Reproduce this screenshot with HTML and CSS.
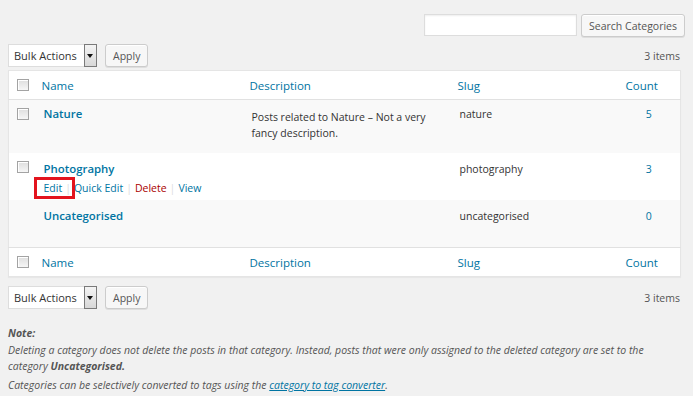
FILE: index.html
```html
<!DOCTYPE html>
<html lang="en">
<head>
  <meta charset="UTF-8">
  <meta name="viewport" content="width=device-width, initial-scale=1.0">
  <title>Categories</title>
  <link rel="stylesheet" href="styles.css">
</head>
<body>
  <div class="wrap">
    <form class="search-box">
      <input type="search" class="search-input">
      <button type="button" class="button">Search Categories</button>
    </form>

    <div class="tablenav">
      <div class="select-wrap">
        <select class="bulk-select">
          <option>Bulk Actions</option>
          <option>Delete</option>
        </select>
        <span class="select-arrow"></span>
      </div>
      <button type="button" class="button">Apply</button>
      <span class="num-items">3 items</span>
    </div>

    <table class="list-table">
      <colgroup>
        <col class="w-cb">
        <col class="w-name">
        <col class="w-desc">
        <col class="w-slug">
        <col class="w-count">
      </colgroup>
      <thead>
        <tr>
          <th class="col-cb"><input type="checkbox" class="cb"></th>
          <th><a href="#">Name</a></th>
          <th><a href="#">Description</a></th>
          <th><a href="#">Slug</a></th>
          <th><a href="#">Count</a></th>
        </tr>
      </thead>
      <tbody>
        <tr class="alt first">
          <td class="col-cb"><input type="checkbox" class="cb"></td>
          <td class="col-name">
            <a href="#" class="row-title">Nature</a>
          </td>
          <td class="desc-text">Posts related to Nature – Not a very fancy description.</td>
          <td>nature</td>
          <td class="col-count"><a href="#">5</a></td>
        </tr>
        <tr>
          <td class="col-cb"><input type="checkbox" class="cb"></td>
          <td class="col-name">
            <a href="#" class="row-title">Photography</a>
            <div class="row-actions">
              <span class="edit-mark"><a href="#">Edit</a></span><span class="sep">|</span><a href="#">Quick&nbsp;Edit</a><span class="sep">|</span><a href="#" class="delete">Delete</a><span class="sep">|</span><a href="#">View</a>
            </div>
          </td>
          <td></td>
          <td>photography</td>
          <td class="col-count"><a href="#">3</a></td>
        </tr>
        <tr class="alt">
          <td class="col-cb"></td>
          <td class="col-name">
            <a href="#" class="row-title">Uncategorised</a>
            <div class="row-actions hidden">&nbsp;</div>
          </td>
          <td></td>
          <td>uncategorised</td>
          <td class="col-count"><a href="#">0</a></td>
        </tr>
      </tbody>
      <tfoot>
        <tr>
          <th class="col-cb"><input type="checkbox" class="cb"></th>
          <th><a href="#">Name</a></th>
          <th><a href="#">Description</a></th>
          <th><a href="#">Slug</a></th>
          <th><a href="#">Count</a></th>
        </tr>
      </tfoot>
    </table>

    <div class="tablenav bottom">
      <div class="select-wrap">
        <select class="bulk-select">
          <option>Bulk Actions</option>
          <option>Delete</option>
        </select>
        <span class="select-arrow"></span>
      </div>
      <button type="button" class="button">Apply</button>
      <span class="num-items">3 items</span>
    </div>

    <div class="form-wrap">
      <p><strong>Note:</strong><br>Deleting a category does not delete the posts in that category. Instead, posts that were only assigned to the deleted category are set to the<br>category <strong>Uncategorised.</strong></p>
      <p>Categories can be selectively converted to tags using the <a href="#">category to tag converter</a>.</p>
    </div>
  </div>
</body>
</html>
```

FILE: styles.css
```css
body {
  margin: 0;
  background: #f1f1f1;
  font-family: 'Open Sans', sans-serif;
  font-size: 10.5px;
  color: #444;
}
a {
  color: #0074a2;
  text-decoration: none;
}
.wrap {
  padding: 14px 8px 0 8px;
}
.search-box {
  display: flex;
  justify-content: flex-end;
  gap: 4px;
  margin: 0;
}
.search-input {
  width: 153px;
  height: 22px;
  box-sizing: border-box;
  border: 1px solid #ddd;
  background: #fff;
  box-shadow: inset 0 1px 2px rgba(0,0,0,0.07);
  margin: 0;
}
.button {
  height: 23px;
  padding: 0 7px;
  font-family: 'Open Sans', sans-serif;
  font-size: 10.5px;
  color: #555;
  background: #f7f7f7;
  border: 1px solid #ccc;
  border-radius: 3px;
  box-shadow: inset 0 1px 0 #fff, 0 1px 0 rgba(0,0,0,0.08);
  cursor: pointer;
}
.tablenav {
  display: flex;
  align-items: center;
  gap: 8px;
  margin-top: 7px;
  height: 23px;
}
.tablenav.bottom {
  margin-top: 9px;
}
.num-items {
  margin-left: auto;
  margin-right: 5px;
  color: #555;
}
.select-wrap {
  display: flex;
  align-items: stretch;
  height: 23px;
  box-sizing: border-box;
  background: #fff;
  border: 1px solid #ddd;
  border-right: none;
}
.bulk-select {
  appearance: none;
  -webkit-appearance: none;
  border: none;
  background: transparent;
  font-family: 'Open Sans', sans-serif;
  font-size: 11px;
  color: #333;
  padding: 0 4px 0 5px;
  width: 75px;
}
.select-arrow {
  width: 13px;
  box-sizing: border-box;
  border: 1px solid #7a7a7a;
  background: linear-gradient(#f4f4f4, #d8d8d8);
  margin: -1px 0;
  position: relative;
}
.select-arrow::after {
  content: '';
  position: absolute;
  left: 2px;
  top: 9px;
  border-left: 3.5px solid transparent;
  border-right: 3.5px solid transparent;
  border-top: 4px solid #111;
}
.list-table {
  width: 673px;
  margin-top: 3px;
  border-collapse: collapse;
  table-layout: fixed;
  background: #fff;
  border: 1px solid #e5e5e5;
  box-shadow: 0 1px 1px rgba(0,0,0,0.04);
}
.w-cb { width: 25px; }
.w-name { width: 208px; }
.w-desc { width: 208px; }
.w-slug { width: 168px; }
.w-count { width: 63px; }
.list-table th {
  font-weight: normal;
  text-align: left;
  height: 28px;
  padding: 0 0 0 8px;
  font-size: 11.5px;
}
.list-table thead th {
  border-bottom: 1px solid #e1e1e1;
}
.list-table tfoot th {
  border-top: 1px solid #e1e1e1;
}
.list-table td {
  vertical-align: top;
  padding: 8px 0 0 10px;
  line-height: 16px;
  color: #333;
}
.list-table tr.first td {
  padding-top: 6px;
}
.list-table tr.alt td {
  background: #f9f9f9;
}
.list-table .col-cb,
.list-table tr.first .col-cb {
  padding: 0 0 0 8px;
}
.list-table td.col-cb,
.list-table tr.first td.col-cb {
  padding-top: 8px;
}
.list-table td.col-name {
  padding-top: 6px;
  padding-bottom: 3px;
}
.list-table tr.first td.col-name {
  padding-top: 4px;
}
.list-table td.col-count {
  text-align: center;
  padding-left: 0;
}
.cb {
  appearance: none;
  -webkit-appearance: none;
  display: block;
  width: 12px;
  height: 12px;
  margin: 0;
  border: 1px solid #a3a3a3;
  background: linear-gradient(#dedede, #f6f6f6);
  box-shadow: inset 1px 1px 0 #fff;
}
.row-title {
  display: block;
  font-weight: 600;
  font-size: 11.4px;
  line-height: 20px;
}
.row-actions {
  font-size: 10.5px;
  line-height: 18px;
}
.row-actions.hidden {
  visibility: hidden;
}
.sep {
  color: #ddd;
  margin: 0 3px;
}
.delete {
  color: #a00;
}
.edit-mark {
  position: relative;
}
.edit-mark::after {
  content: '';
  position: absolute;
  left: -10px;
  right: -13px;
  top: -4px;
  bottom: -4px;
  border: 3px solid #e3141e;
  box-sizing: border-box;
}
.list-table tr.first td.desc-text {
  padding-top: 9px;
  padding-right: 20px;
  padding-bottom: 12px;
}
.form-wrap {
  margin-top: 16px;
  font-style: italic;
  font-size: 10.5px;
  color: #555;
}
.form-wrap p {
  margin: 0 0 2px 0;
  line-height: 16.5px;
}
.form-wrap a {
  text-decoration: underline;
}
```
